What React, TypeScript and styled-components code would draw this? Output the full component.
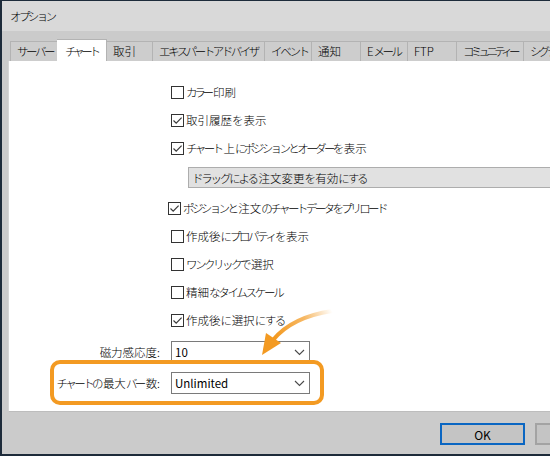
import React from "react";
import styled, { createGlobalStyle } from "styled-components";

const GlobalStyle = createGlobalStyle`
  html, body {
    margin: 0;
    padding: 0;
    width: 550px;
    height: 456px;
    overflow: hidden;
    background: #1d2b3a;
  }
  body {
    font-family: "Noto Sans CJK JP", "Noto Sans", sans-serif;
    font-weight: 300;
    font-size: 11.5px;
    color: #000;
  }
`;

const Window = styled.div`
  position: relative;
  margin: 1px 0 0 2px;
  width: 620px;
  height: 453px;
  display: flex;
  flex-direction: column;
  background: #cbcbcb;
  overflow: hidden;
`;

const TitleBar = styled.div`
  height: 30px;
  flex: none;
  display: flex;
  align-items: center;
  padding-left: 8px;
  background: #d9d9d9;
`;

const DialogBody = styled.div`
  flex: 1;
  display: flex;
  flex-direction: column;
  padding: 8px 0 0 6px;
`;

const TabStrip = styled.div`
  display: flex;
  align-items: flex-end;
  height: 22px;
  margin-left: 2px;
  flex: none;
`;

const Tab = styled.div<{ $w: number; $active?: boolean }>`
  box-sizing: border-box;
  width: ${(p) => p.$w}px;
  height: ${(p) => (p.$active ? 22 : 20)}px;
  flex: none;
  display: flex;
  align-items: center;
  padding-left: ${(p) => (p.$active ? 8 : 6)}px;
  padding-bottom: ${(p) => (p.$active ? 0 : 1)}px;
  background: ${(p) => (p.$active ? "#ffffff" : "#cdcdcd")};
  border: 1px solid #b3b3b3;
  border-bottom: none;
  border-left-width: ${(p) => (p.$active ? 0 : 1)}px;
  margin-right: -1px;
  white-space: nowrap;
  overflow: hidden;
  position: relative;
  z-index: ${(p) => (p.$active ? 1 : 0)};
`;

const Panel = styled.div`
  box-sizing: border-box;
  height: 351px;
  flex: none;
  background: #ffffff;
  border-left: 1px solid #d6d6d6;
  border-bottom: 1px solid #bdbdbd;
  padding-top: 17px;
  display: flex;
  flex-direction: column;
`;

const CheckRow = styled.div<{ $indent?: number }>`
  height: 28px;
  display: flex;
  align-items: center;
  margin-left: ${(p) => p.$indent ?? 162}px;
  white-space: nowrap;
`;

const RowText = styled.span`
  margin-left: 2px;
`;

const Kana = styled.span<{ $ls: number; $tail: number }>`
  letter-spacing: ${(p) => p.$ls}px;
  margin-right: ${(p) => p.$tail}px;
`;

const Box = styled.span`
  box-sizing: border-box;
  width: 13px;
  height: 13px;
  flex: none;
  border: 1px solid #333333;
  background: #ffffff;
  display: flex;
  align-items: center;
  justify-content: center;
`;

const DisabledBar = styled.div`
  box-sizing: border-box;
  margin: 5px 0 6px 179px;
  width: 420px;
  height: 21px;
  background: #e1e1e1;
  border: 1px solid #adadad;
  display: flex;
  align-items: center;
  padding-left: 3px;
  white-space: nowrap;
`;

const FieldGrid = styled.div`
  display: grid;
  grid-template-columns: 151px 139px;
  column-gap: 11px;
  row-gap: 9px;
  margin-top: 7px;
  align-items: center;
`;

const FieldLabel = styled.span`
  text-align: right;
  white-space: nowrap;
`;

const Select = styled.div`
  box-sizing: border-box;
  height: 22px;
  border: 1px solid #7a7a7a;
  background: #ffffff;
  display: flex;
  align-items: center;
  justify-content: space-between;
  padding: 0 4px 0 3px;
  font-weight: 400;
`;

const Footer = styled.div`
  flex: 1;
  display: flex;
  align-items: flex-start;
  gap: 10px;
  padding: 11px 0 0 432px;
`;

const Button = styled.div<{ $primary?: boolean }>`
  box-sizing: border-box;
  width: 85px;
  height: 22px;
  flex: none;
  display: flex;
  align-items: center;
  justify-content: center;
  background: #c4c4c4;
  border: ${(p) => (p.$primary ? "2px solid #0a66c2" : "2px solid #a3a3a3")};
  font-size: 12px;
  font-weight: 400;
`;

const Highlight = styled.div`
  position: absolute;
  left: 48px;
  top: 359px;
  width: 274px;
  height: 45px;
  box-sizing: border-box;
  border: 4px solid #f39a22;
  border-radius: 10px;
  pointer-events: none;
`;

const ArrowLayer = styled.svg`
  position: absolute;
  left: -2px;
  top: -1px;
  pointer-events: none;
`;

/* Kana runs are tightened to mimic the proportional kana of the original UI font */
const Jp = ({ text, ls }: { text: string; ls: number }) => {
  const parts = text.split(/([\u3040-\u30ff]+)/).filter((s) => s.length > 0);
  return (
    <>
      {parts.map((s, i) =>
        /[\u3040-\u30ff]/.test(s) ? (
          <Kana key={i} $ls={ls} $tail={i < parts.length - 1 ? -ls * 0.75 : 0}>
            {s}
          </Kana>
        ) : (
          <React.Fragment key={i}>{s}</React.Fragment>
        )
      )}
    </>
  );
};

const Check = ({ on }: { on?: boolean }) => (
  <Box>
    {on && (
      <svg width="11" height="11" viewBox="0 0 11 11">
        <path d="M1.5 5.5 L4.2 8.2 L9.6 2.6" fill="none" stroke="#3a3a3a" strokeWidth="1.2" />
      </svg>
    )}
  </Box>
);

const Chevron = () => (
  <svg width="11" height="7" viewBox="0 0 11 7">
    <path d="M1 1 L5.5 5.5 L10 1" fill="none" stroke="#4a4a4a" strokeWidth="1.1" />
  </svg>
);

const tabs: { label: string; w: number; ls: number; active?: boolean }[] = [
  { label: "サーバー", w: 48, ls: -2.5 },
  { label: "チャート", w: 50, ls: -3.3, active: true },
  { label: "取引", w: 47, ls: 0 },
  { label: "エキスパートアドバイザ", w: 113, ls: -2.5 },
  { label: "イベント", w: 48, ls: -2.3 },
  { label: "通知", w: 50, ls: 0 },
  { label: "Eメール", w: 48, ls: -2.6 },
  { label: "FTP", w: 50, ls: 0 },
  { label: "コミュニティー", w: 68, ls: -3.7 },
  { label: "シグナル", w: 60, ls: -3 },
];

type Row = { label: string; on?: boolean; ls: number; indent?: number };

const rows: Row[] = [
  { label: "カラー印刷", ls: -3.3 },
  { label: "取引履歴を表示", on: true, ls: 0 },
  { label: "チャート上にポジションとオーダーを表示", on: true, ls: -2.6 },
];

const rows2: Row[] = [
  { label: "ポジションと注文のチャートデータをプリロード", on: true, ls: -2.6, indent: 159 },
  { label: "作成後にプロパティを表示", ls: -2.3 },
  { label: "ワンクリックで選択", ls: -2.5 },
  { label: "精細なタイムスケール", ls: -2.3 },
  { label: "作成後に選択にする", on: true, ls: -1.5 },
];

const CheckItem = ({ r }: { r: Row }) => (
  <CheckRow $indent={r.indent}>
    <Check on={r.on} />
    <RowText>
      <Jp text={r.label} ls={r.ls} />
    </RowText>
  </CheckRow>
);

export default function App() {
  return (
    <>
      <GlobalStyle />
      <Window>
        <TitleBar>
          <Jp text="オプション" ls={-2.6} />
        </TitleBar>
        <DialogBody>
          <TabStrip>
            {tabs.map((t) => (
              <Tab key={t.label} $w={t.w} $active={t.active}>
                <Jp text={t.label} ls={t.ls} />
              </Tab>
            ))}
          </TabStrip>
          <Panel>
            {rows.map((r) => (
              <CheckItem key={r.label} r={r} />
            ))}
            <DisabledBar>
              <Jp text="ドラッグによる注文変更を有効にする" ls={-2.2} />
            </DisabledBar>
            {rows2.map((r) => (
              <CheckItem key={r.label} r={r} />
            ))}
            <FieldGrid>
              <FieldLabel>磁力感応度:</FieldLabel>
              <Select>
                <span>10</span>
                <Chevron />
              </Select>
              <FieldLabel>
                <Jp text="チャートの最大バー数:" ls={-2.6} />
              </FieldLabel>
              <Select>
                <span>Unlimited</span>
                <Chevron />
              </Select>
            </FieldGrid>
          </Panel>
          <Footer>
            <Button $primary>OK</Button>
            <Button />
          </Footer>
        </DialogBody>
        <Highlight />
        <ArrowLayer width="550" height="456" viewBox="0 0 550 456">
          <defs>
            <linearGradient id="arrowGrad" gradientUnits="userSpaceOnUse" x1="332" y1="311" x2="276" y2="338">
              <stop offset="0" stopColor="#f39a22" stopOpacity="0" />
              <stop offset="0.45" stopColor="#f39a22" stopOpacity="0.7" />
              <stop offset="1" stopColor="#f39a22" stopOpacity="1" />
            </linearGradient>
          </defs>
          <path d="M332 311 Q292 317 273 340" fill="none" stroke="url(#arrowGrad)" strokeWidth="4" strokeLinecap="round" />
          <path d="M262 355 L281 343 L266 333 Z" fill="#f39a22" />
        </ArrowLayer>
      </Window>
    </>
  );
}
